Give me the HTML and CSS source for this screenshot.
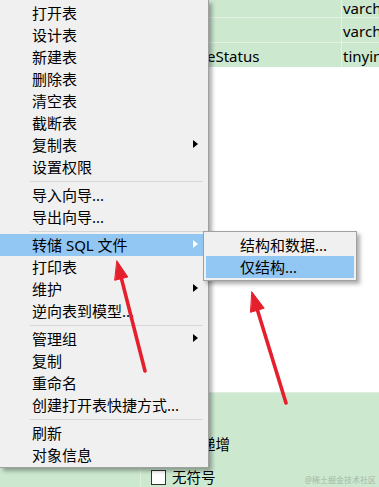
FILE: index.html
```html
<!DOCTYPE html>
<html lang="zh">
<head>
<meta charset="utf-8">
<title>Navicat 右键菜单</title>
<link rel="stylesheet" href="styles.css">
</head>
<body>
<div class="screen">
  <div class="grid">
    <div class="row row-first"><div class="cell name"></div><div class="cell type">varch</div></div>
    <div class="row"><div class="cell name"></div><div class="cell type">varch</div></div>
    <div class="row"><div class="cell name">eStatus</div><div class="cell type">tinyin</div></div>
  </div>
  <div class="blank"></div>
  <div class="panel">
    <div class="panel-rail"></div>
    <div class="panel-body">
      <div class="check"><span class="box"></span><span>自动递增</span></div>
      <div class="check"><span class="box"></span><span>无符号</span></div>
    </div>
  </div>

  <div class="menu">
    <div class="item">打开表</div>
    <div class="item">设计表</div>
    <div class="item">新建表</div>
    <div class="item">删除表</div>
    <div class="item">清空表</div>
    <div class="item">截断表</div>
    <div class="item sub">复制表<span class="tri"></span></div>
    <div class="item">设置权限</div>
    <div class="sep"></div>
    <div class="item">导入向导...</div>
    <div class="item">导出向导...</div>
    <div class="sep"></div>
    <div class="item sub active">转储 SQL 文件<span class="tri"></span></div>
    <div class="item">打印表</div>
    <div class="item sub">维护<span class="tri"></span></div>
    <div class="item">逆向表到模型...</div>
    <div class="sep"></div>
    <div class="item sub">管理组<span class="tri"></span></div>
    <div class="item">复制</div>
    <div class="item">重命名</div>
    <div class="item">创建打开表快捷方式...</div>
    <div class="sep"></div>
    <div class="item">刷新</div>
    <div class="item">对象信息</div>
  </div>

  <div class="submenu">
    <div class="item">结构和数据...</div>
    <div class="item active">仅结构...</div>
  </div>

  <svg class="arrows" width="379" height="487" viewBox="0 0 379 487">
    <g fill="#e51f2b" stroke="#e51f2b" stroke-linecap="round" stroke-linejoin="round">
      <line x1="145" y1="371" x2="121.4" y2="278.4" stroke-width="3.6"/>
      <polygon points="117,261 127.8,277 115,280.2" stroke-width="1"/>
      <line x1="286" y1="403" x2="257.5" y2="310.2" stroke-width="3.6"/>
      <polygon points="252,292 264.2,308.2 250.8,312.2" stroke-width="1"/>
    </g>
  </svg>

  <div class="watermark">@稀土掘金技术社区</div>
</div>
</body>
</html>
```

FILE: styles.css
```css
* { box-sizing: border-box; }

body {
  margin: 0;
  font-family: "Noto Sans", "Noto Sans CJK SC", sans-serif;
  color: #000;
}

.screen {
  position: relative;
  width: 379px;
  height: 487px;
  overflow: hidden;
  background: #ffffff;
  display: flex;
  flex-direction: column;
}

/* background table */
.grid {
  display: flex;
  flex-direction: column;
  background: #cce8cf;
}

.row {
  display: flex;
  height: 25px;
  border-bottom: 1px solid #e4f2e5;
  font-size: 15px;
  line-height: 24px;
}

.row-first {
  height: 18px;
  align-items: flex-start;
}

.row:last-child { border-bottom: none; height: 24px; }

.cell.name {
  width: 342px;
  padding-left: 207px;
  border-right: 1px solid #e4f2e5;
  white-space: nowrap;
  overflow: hidden;
  padding-top: 1px;
}

.cell.type {
  flex: 1;
  padding-left: 1px;
  white-space: nowrap;
  overflow: hidden;
  padding-top: 1px;
}

.row-first .cell {
  height: 17px;
  line-height: 16px;
  padding-top: 0;
}

.blank {
  height: 325px;
  flex: none;
}

.panel {
  flex: 1;
  display: flex;
  background: #cce8cf;
  border-top: 1px solid #dfeee0;
}

.panel-rail {
  width: 141px;
  border-right: 1px solid #dcefdc;
}

.panel-body {
  flex: 1;
  display: flex;
  flex-direction: column;
  gap: 11px;
  padding: 40px 0 0 10px;
}

.check {
  display: flex;
  align-items: center;
  gap: 6px;
  height: 22px;
  font-size: 14.5px;
  line-height: 22px;
}

.box {
  width: 15px;
  height: 15px;
  background: #fff;
  border: 1px solid #333;
  flex: none;
}

/* context menu */
.menu {
  position: absolute;
  left: 0;
  top: 0;
  width: 209px;
  padding: 2px 5px 1px 0;
  background: #f0f0f0;
  border-right: 1px solid #a0a0a0;
  border-bottom: 1px solid #a0a0a0;
  box-shadow: 3px 3px 4px rgba(0, 0, 0, 0.32);
  font-size: 15px;
}

.item {
  position: relative;
  height: 22px;
  line-height: 22px;
  padding-left: 32px;
  white-space: nowrap;
}

.item.active { background: #92c6f3; }

.tri {
  position: absolute;
  right: 5px;
  top: 6px;
  width: 0;
  height: 0;
  border-top: 4.5px solid transparent;
  border-bottom: 4.5px solid transparent;
  border-left: 5px solid #000;
}

.item.active .tri { border-left-color: #fff; }

.sep {
  height: 6px;
  padding-top: 3px;
  margin-left: 30px;
}

.sep::before {
  content: "";
  display: block;
  height: 1px;
  background: #d6d6d6;
}

.submenu {
  position: absolute;
  left: 203px;
  top: 231px;
  width: 154px;
  padding: 2px;
  background: #f0f0f0;
  border: 1px solid #a0a0a0;
  box-shadow: 3px 3px 4px rgba(0, 0, 0, 0.32);
  font-size: 15px;
}

.submenu .item { padding-left: 34px; }

.arrows {
  position: absolute;
  left: 0;
  top: 0;
  pointer-events: none;
}

.watermark {
  position: absolute;
  right: 3px;
  bottom: 2px;
  font-size: 8px;
  line-height: 10px;
  color: #a6b7a8;
  letter-spacing: 0;
}
```
